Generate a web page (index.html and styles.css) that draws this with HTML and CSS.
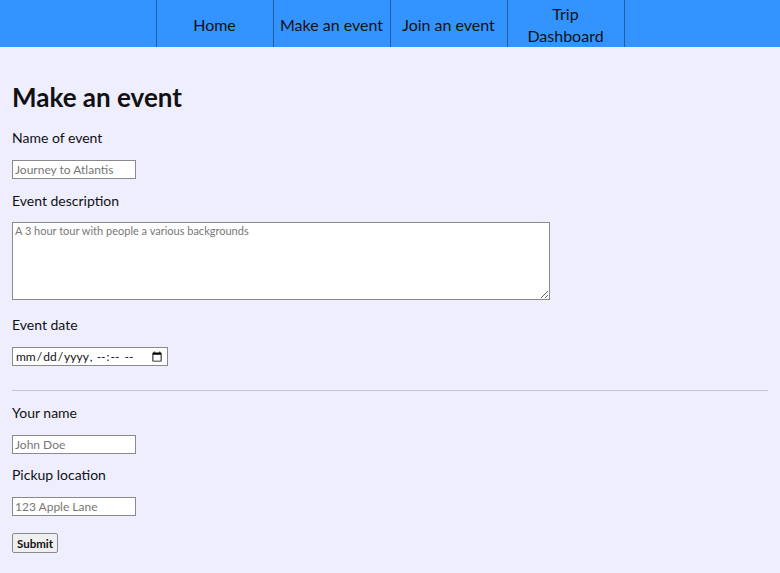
FILE: index.html
```html
<!DOCTYPE html>
<html>
<head>
    <title>Make an event</title>
    <meta charset="UTF-8">
    <link rel="stylesheet" href="styles.css">
</head>
<body>
<nav class="topnav">
    <ul class="topnav__list">
        <li class="topnav__item"><a href="#">Home</a></li>
        <li class="topnav__item"><a href="#">Make an event</a></li>
        <li class="topnav__item"><a href="#">Join an event</a></li>
        <li class="topnav__item"><a href="#">Trip Dashboard</a></li>
    </ul>
</nav>
<main class="page">
    <h1>Make an event</h1>
    <form class="event-form">
        <label class="field__label" for="name">Name of event</label>
        <input class="field__input" id="name" type="text" placeholder="Journey to Atlantis">

        <label class="field__label" for="desc">Event description</label>
        <textarea class="field__textarea" id="desc" placeholder="A 3 hour tour with people a various backgrounds"></textarea>

        <label class="field__label field__label--after-area" for="date">Event date</label>
        <input class="field__date" id="date" type="datetime-local">

        <hr class="divider">

        <label class="field__label field__label--after-rule" for="you">Your name</label>
        <input class="field__input" id="you" type="text" placeholder="John Doe">

        <label class="field__label field__label--tight" for="pickup">Pickup location</label>
        <input class="field__input" id="pickup" type="text" placeholder="123 Apple Lane">

        <button class="submit" type="submit">Submit</button>
    </form>
</main>
</body>
</html>
```

FILE: styles.css
```css
body {
    margin: 0;
    background-color: #efeeff;
    color: #111;
    font-family: Lato, "Noto Sans", sans-serif;
}

.topnav {
    background-color: #3394ff;
    height: 47px;
}

.topnav__list {
    display: flex;
    justify-content: center;
    box-sizing: border-box;
    height: 100%;
    margin: 0;
    padding: 3px 0 0;
    list-style: none;
}

.topnav__item {
    display: flex;
    align-items: center;
    justify-content: center;
    width: 116px;
    margin-top: -3px;
    padding-top: 3px;
    border-right: 1px solid #1f5f9e;
    text-align: center;
    font-size: 16px;
    line-height: 22px;
}

.topnav__item:first-child {
    border-left: 1px solid #1f5f9e;
}

.topnav__item a {
    display: block;
    max-width: 106px;
    color: #111;
    text-decoration: none;
}

.page {
    padding: 0 12px;
}

h1 {
    margin: 0;
    padding: 35px 0 0;
    font-size: 26px;
    line-height: 30px;
    font-weight: bold;
}

.event-form {
    display: flex;
    flex-direction: column;
    align-items: flex-start;
}

.field__label {
    display: block;
    margin-top: 12px;
    font-size: 14px;
    line-height: 20px;
}

h1 + .event-form .field__label:first-child {
    margin-top: 16px;
}

.field__label--after-area {
    margin-top: 15px;
}

.field__label--after-rule,
.field__label--tight {
    margin-top: 11px;
}

.field__input,
.field__date,
.field__textarea {
    margin-top: 12px;
    box-sizing: border-box;
    border: 1px solid #8a8a8a;
    background: #fff;
    font-family: inherit;
    font-size: 12px;
    padding: 1px 2px;
}

.field__input {
    width: 124px;
    height: 19px;
}

.field__textarea {
    margin-top: 11px;
    width: 538px;
    height: 78px;
    font-size: 11px;
    resize: vertical;
}

.field__date {
    width: 156px;
    height: 19px;
    font-size: 12px;
    color: #111;
}

::placeholder {
    color: #777;
}

.divider {
    align-self: stretch;
    margin: 24px 0 0;
    border: 0;
    border-top: 1px solid #c4c4cc;
    height: 1px;
}

.submit {
    margin-top: 17px;
    padding: 0 4px;
    height: 20px;
    font-family: inherit;
    font-size: 11.5px;
    font-weight: bold;
    color: #111;
    background: #efefef;
    border: 1px solid #8a8a8a;
    border-radius: 2px;
}
```
